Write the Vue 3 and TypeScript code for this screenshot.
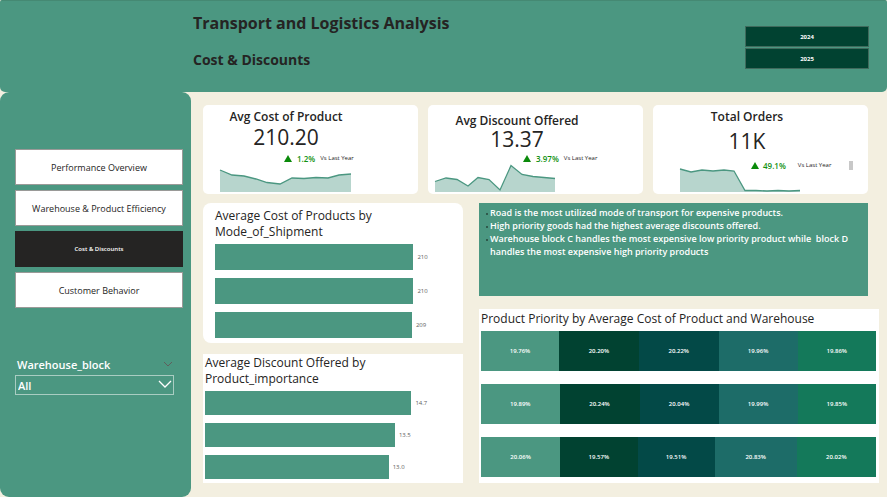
<script setup lang="ts">
import { ref } from 'vue'

interface Kpi {
  id: string
  title: string
  value: string
  delta: string
  scroll: boolean
  points: [number, number][]
  width: number
}

interface Bar {
  label: string
  share: number
}

interface Segment {
  share: number
  tone: string
}

const years = ['2024', '2025']
const pages = ['Performance Overview', 'Warehouse & Product Efficiency', 'Cost & Discounts', 'Customer Behavior']
const activePage = ref('Cost & Discounts')
const block = ref('All')

const kpis: Kpi[] = [
  {
    id: 'cost',
    title: 'Avg Cost of Product',
    value: '210.20',
    delta: '1.2%',
    scroll: false,
    width: 131,
    points: [[0, 6], [12, 11], [24, 12], [36, 15], [47, 18.5], [60, 20], [72, 14], [84, 14.5], [96, 13.5], [108, 14], [119, 11], [131, 10]],
  },
  {
    id: 'discount',
    title: 'Avg Discount Offered',
    value: '13.37',
    delta: '3.97%',
    scroll: false,
    width: 120,
    points: [[0, 17.5], [11, 14], [22, 15.5], [33, 22], [43, 13.5], [54, 15.5], [65, 26], [76, 1.5], [87, 10.5], [98, 12.5], [109, 13.5], [120, 14.5]],
  },
  {
    id: 'orders',
    title: 'Total Orders',
    value: '11K',
    delta: '49.1%',
    scroll: true,
    width: 120,
    points: [[0, 5], [11, 8], [22, 6], [33, 7], [44, 6], [54, 7], [65, 26.5], [76, 26.5], [87, 27], [98, 26.5], [109, 27], [120, 26.5]],
  },
]

const shipmentBars: Bar[] = [
  { label: '210', share: 80 },
  { label: '210', share: 80 },
  { label: '209', share: 79.4 },
]

const importanceBars: Bar[] = [
  { label: '14.7', share: 80 },
  { label: '13.5', share: 73.6 },
  { label: '13.0', share: 71.2 },
]

const tones = ['a', 'b', 'c', 'd', 'f']
const toSegments = (shares: number[]): Segment[] => shares.map((share, i) => ({ share, tone: tones[i] }))
const priorityRows: Segment[][] = [
  toSegments([19.76, 20.2, 20.22, 19.96, 19.86]),
  toSegments([19.89, 20.24, 20.04, 19.99, 19.85]),
  toSegments([20.06, 19.57, 19.51, 20.83, 20.02]),
]

const linePoints = (kpi: Kpi): string => kpi.points.map((p) => p.join(',')).join(' ')
const areaPoints = (kpi: Kpi): string => `0,28 ${linePoints(kpi)} ${kpi.width},28`
</script>

<template>
  <div class="page">
    <header class="banner">
      <div class="titles">
        <h1>Transport and Logistics Analysis</h1>
        <h2>Cost &amp; Discounts</h2>
      </div>
      <div class="years">
        <button v-for="year in years" :key="year" type="button" class="year">{{ year }}</button>
      </div>
    </header>

    <div class="body">
      <aside class="sidebar">
        <nav class="nav">
          <button
            v-for="page in pages"
            :key="page"
            type="button"
            class="nav-item"
            :class="{ active: page === activePage }"
            @click="activePage = page"
          >
            {{ page }}
          </button>
        </nav>
        <div class="slicer">
          <div class="slicer-head">
            <label for="block">Warehouse_block</label>
            <svg class="slicer-chevron" viewBox="0 0 10 6" aria-hidden="true"><path d="M1 1 L5 5 L9 1" /></svg>
          </div>
          <div class="select-wrap">
            <select id="block" v-model="block">
              <option>All</option>
            </select>
            <svg class="select-chevron" viewBox="0 0 14 8" aria-hidden="true"><path d="M1 1 L7 7 L13 1" /></svg>
          </div>
        </div>
      </aside>

      <main class="content">
        <section class="kpis">
          <article v-for="kpi in kpis" :key="kpi.id" class="kpi" :class="kpi.id">
            <div class="kpi-head">
              <h3>{{ kpi.title }}</h3>
              <div class="kpi-value">{{ kpi.value }}</div>
            </div>
            <div class="kpi-delta">
              <svg class="triangle" viewBox="0 0 8 7" aria-hidden="true"><path d="M4 0 L8 7 H0 Z" /></svg>
              <span class="pct">{{ kpi.delta }}</span>
              <span class="versus">Vs Last Year</span>
              <span v-if="kpi.scroll" class="scroll-thumb"></span>
            </div>
            <svg class="spark" :viewBox="`0 0 ${kpi.width} 28`" :width="kpi.width" height="28" aria-hidden="true">
              <polygon :points="areaPoints(kpi)" />
              <polyline :points="linePoints(kpi)" />
            </svg>
          </article>
        </section>

        <div class="charts">
          <div class="column">
            <section class="card shipment">
              <h3>Average Cost of Products by<br />Mode_of_Shipment</h3>
              <ul class="bars">
                <li v-for="(bar, i) in shipmentBars" :key="i">
                  <span class="bar" :style="{ width: bar.share + '%' }"></span>
                  <span class="bar-label">{{ bar.label }}</span>
                </li>
              </ul>
            </section>
            <section class="card importance">
              <h3>Average Discount Offered by<br />Product_importance</h3>
              <ul class="bars">
                <li v-for="(bar, i) in importanceBars" :key="i">
                  <span class="bar" :style="{ width: bar.share + '%' }"></span>
                  <span class="bar-label">{{ bar.label }}</span>
                </li>
              </ul>
            </section>
          </div>

          <div class="column wide">
            <ul class="insights">
              <li>Road is the most utilized mode of transport for expensive products.</li>
              <li>High priority goods had the highest average discounts offered.</li>
              <li>Warehouse block C handles the most expensive low priority product while&nbsp; block D handles the most expensive high priority products</li>
            </ul>
            <section class="card priority">
              <h3>Product Priority by Average Cost of Product and Warehouse</h3>
              <div class="stacks">
                <div v-for="(row, r) in priorityRows" :key="r" class="stack">
                  <span v-for="seg in row" :key="seg.tone" class="segment" :class="'tone-' + seg.tone" :style="{ width: seg.share + '%' }">
                    {{ seg.share.toFixed(2) }}%
                  </span>
                </div>
              </div>
            </section>
          </div>
        </div>
      </main>
    </div>
  </div>
</template>

<style>
body {
  margin: 0;
  background: #f3efe0;
}
</style>

<style scoped>
.page {
  display: flex;
  flex-direction: column;
  min-height: 100vh;
  font-family: "Open Sans", "Noto Sans", sans-serif;
  color: #252423;
  background: #f3efe0;
}

h1, h2, h3, ul {
  margin: 0;
  padding: 0;
}

ul {
  list-style: none;
}

button, select {
  font-family: inherit;
  border-radius: 0;
  cursor: pointer;
}

.banner {
  display: flex;
  justify-content: space-between;
  box-sizing: border-box;
  height: 92px;
  padding: 0 18px 0 193px;
  background: #4b9781;
  border-top: 1px solid #458973;
  border-radius: 2px 2px 5px 5px;
}

.titles {
  display: flex;
  flex-direction: column;
  gap: 14px;
  padding-top: 10px;
}

h1 {
  font-size: 16px;
  line-height: 24px;
  font-weight: 700;
}

h2 {
  font-size: 14px;
  line-height: 22px;
  font-weight: 700;
}

.years {
  display: flex;
  flex-direction: column;
  gap: 1px;
  width: 124px;
  padding-top: 25px;
}

.year {
  height: 21px;
  padding: 0;
  border: 1px solid #3f6a5c;
  background: #014231;
  color: #fff;
  font-size: 6px;
  font-weight: 700;
}

.body {
  display: flex;
  flex: 1;
}

.sidebar {
  box-sizing: border-box;
  flex: 0 0 191px;
  padding: 57px 8px 0 15px;
  background: #4b9781;
  border-radius: 9px;
}

.nav {
  display: flex;
  flex-direction: column;
  gap: 5px;
}

.nav-item {
  height: 36px;
  padding: 0;
  border: 1px solid #9a9a98;
  background: #fff;
  color: #252423;
  font-size: 9px;
}

.nav-item.active {
  border-color: #252423;
  background: #252423;
  color: #fff;
  font-size: 6px;
  font-weight: 600;
}

.slicer {
  display: flex;
  flex-direction: column;
  gap: 3px;
  margin: 48px 9px 0 0;
}

.slicer-head {
  display: flex;
  align-items: center;
  justify-content: space-between;
  height: 16px;
  padding: 0 1px 0 2px;
  color: #fff;
  font-size: 11px;
  font-weight: 600;
}

.slicer-chevron {
  width: 10px;
  height: 6px;
  fill: none;
  stroke: #605e5c;
}

.select-wrap {
  position: relative;
}

select {
  display: block;
  box-sizing: border-box;
  width: 100%;
  height: 20px;
  padding: 0 2px;
  appearance: none;
  border: 1px solid #a9cdc2;
  background: transparent;
  color: #fff;
  font-size: 11px;
  font-weight: 600;
}

.select-chevron {
  position: absolute;
  top: 5px;
  right: 2px;
  width: 14px;
  height: 8px;
  fill: none;
  stroke: #fff;
  stroke-width: 1.3;
  pointer-events: none;
}

.content {
  display: flex;
  flex: 1;
  flex-direction: column;
  gap: 9px;
  min-width: 0;
  padding: 13px 8px 14px 12px;
}

.kpis {
  display: grid;
  grid-template-columns: repeat(3, 1fr);
  gap: 10px;
  margin-right: 11px;
}

.kpi {
  display: grid;
  height: 89px;
  overflow: hidden;
  border-radius: 5px;
  background: #fff;
}

.kpi > * {
  grid-area: 1 / 1;
}

.kpi-head {
  text-align: center;
}

.kpi h3 {
  font-size: 12px;
  line-height: 16px;
  font-weight: 600;
}

.kpi-value {
  font-size: 21px;
  line-height: 24px;
  font-weight: 500;
}

.kpi-delta {
  display: flex;
  align-items: center;
  align-self: start;
  gap: 5px;
  height: 10px;
  white-space: nowrap;
}

.triangle {
  width: 8px;
  height: 7px;
  fill: #0a8a0a;
}

.pct {
  color: #129112;
  font-size: 8px;
  font-weight: 600;
}

.versus {
  font-size: 6px;
}

.scroll-thumb {
  width: 4px;
  height: 9px;
  background: #c8c8c8;
}

.spark {
  align-self: end;
  margin-bottom: 2px;
  overflow: visible;
}

.spark polygon {
  fill: #b7d5cd;
}

.spark polyline {
  fill: none;
  stroke: #4b9781;
  stroke-width: 1.3;
}

.cost .kpi-head {
  width: 166px;
  padding-top: 4px;
}

.cost .kpi-delta {
  margin: 48px 0 0 81px;
}

.cost .spark {
  margin-left: 17px;
}

.discount .kpi-head {
  width: 178px;
  padding-top: 8px;
}

.discount .kpi-value {
  line-height: 20px;
}

.discount .kpi-delta {
  margin: 48px 0 0 95px;
}

.discount .spark {
  margin-left: 7px;
}

.orders .kpi-head {
  width: 188px;
  padding-top: 4px;
}

.orders .kpi-value {
  padding-top: 4px;
}

.orders .kpi-delta {
  gap: 4px;
  margin: 55px 0 0 98px;
}

.orders .versus {
  margin-left: 8px;
}

.orders .scroll-thumb {
  margin-left: 14px;
}

.orders .spark {
  margin-left: 27px;
}

.charts {
  display: grid;
  grid-template-columns: 260fr 400fr;
  align-items: start;
  gap: 16px;
}

.column {
  display: flex;
  flex-direction: column;
  gap: 11px;
  min-width: 0;
}

.column.wide {
  gap: 13px;
}

.card {
  box-sizing: border-box;
  background: #fff;
}

.card h3 {
  font-size: 12px;
  line-height: 16px;
  font-weight: 400;
}

.shipment {
  padding: 5px 0 5px 12px;
  border-radius: 8px 8px 0 8px;
}

.importance {
  padding: 1px 0 4px 2px;
}

.bars {
  display: flex;
  flex-direction: column;
  gap: 8px;
  padding-top: 4px;
}

.bars li {
  display: flex;
  align-items: center;
  gap: 4px;
}

.bar {
  height: 26px;
  background: #4b9781;
}

.importance .bar {
  height: 24px;
}

.bar-label {
  color: #605e5c;
  font-size: 6px;
  line-height: 8px;
}

.insights {
  box-sizing: border-box;
  min-height: 93px;
  margin-right: 11px;
  padding: 3px 12px 0 11px;
  background: #4b9781;
  color: #fff;
  font-size: 9px;
  line-height: 13px;
  font-weight: 600;
}

.insights li {
  position: relative;
}

.insights li::before {
  position: absolute;
  top: 7px;
  left: -4px;
  width: 2px;
  height: 2px;
  background: #2f5a4c;
  content: "";
}

.priority {
  padding: 2px 3px 6px 2px;
}

.stacks {
  display: flex;
  flex-direction: column;
  gap: 13px;
  padding-top: 4px;
}

.stack {
  display: flex;
}

.segment {
  display: flex;
  align-items: center;
  justify-content: center;
  height: 40px;
  color: #fff;
  font-size: 6px;
  font-weight: 600;
}

.tone-a { background: #4b9781; }
.tone-b { background: #014231; }
.tone-c { background: #034947; }
.tone-d { background: #1d6c68; }
.tone-f { background: #14795a; }
</style>
